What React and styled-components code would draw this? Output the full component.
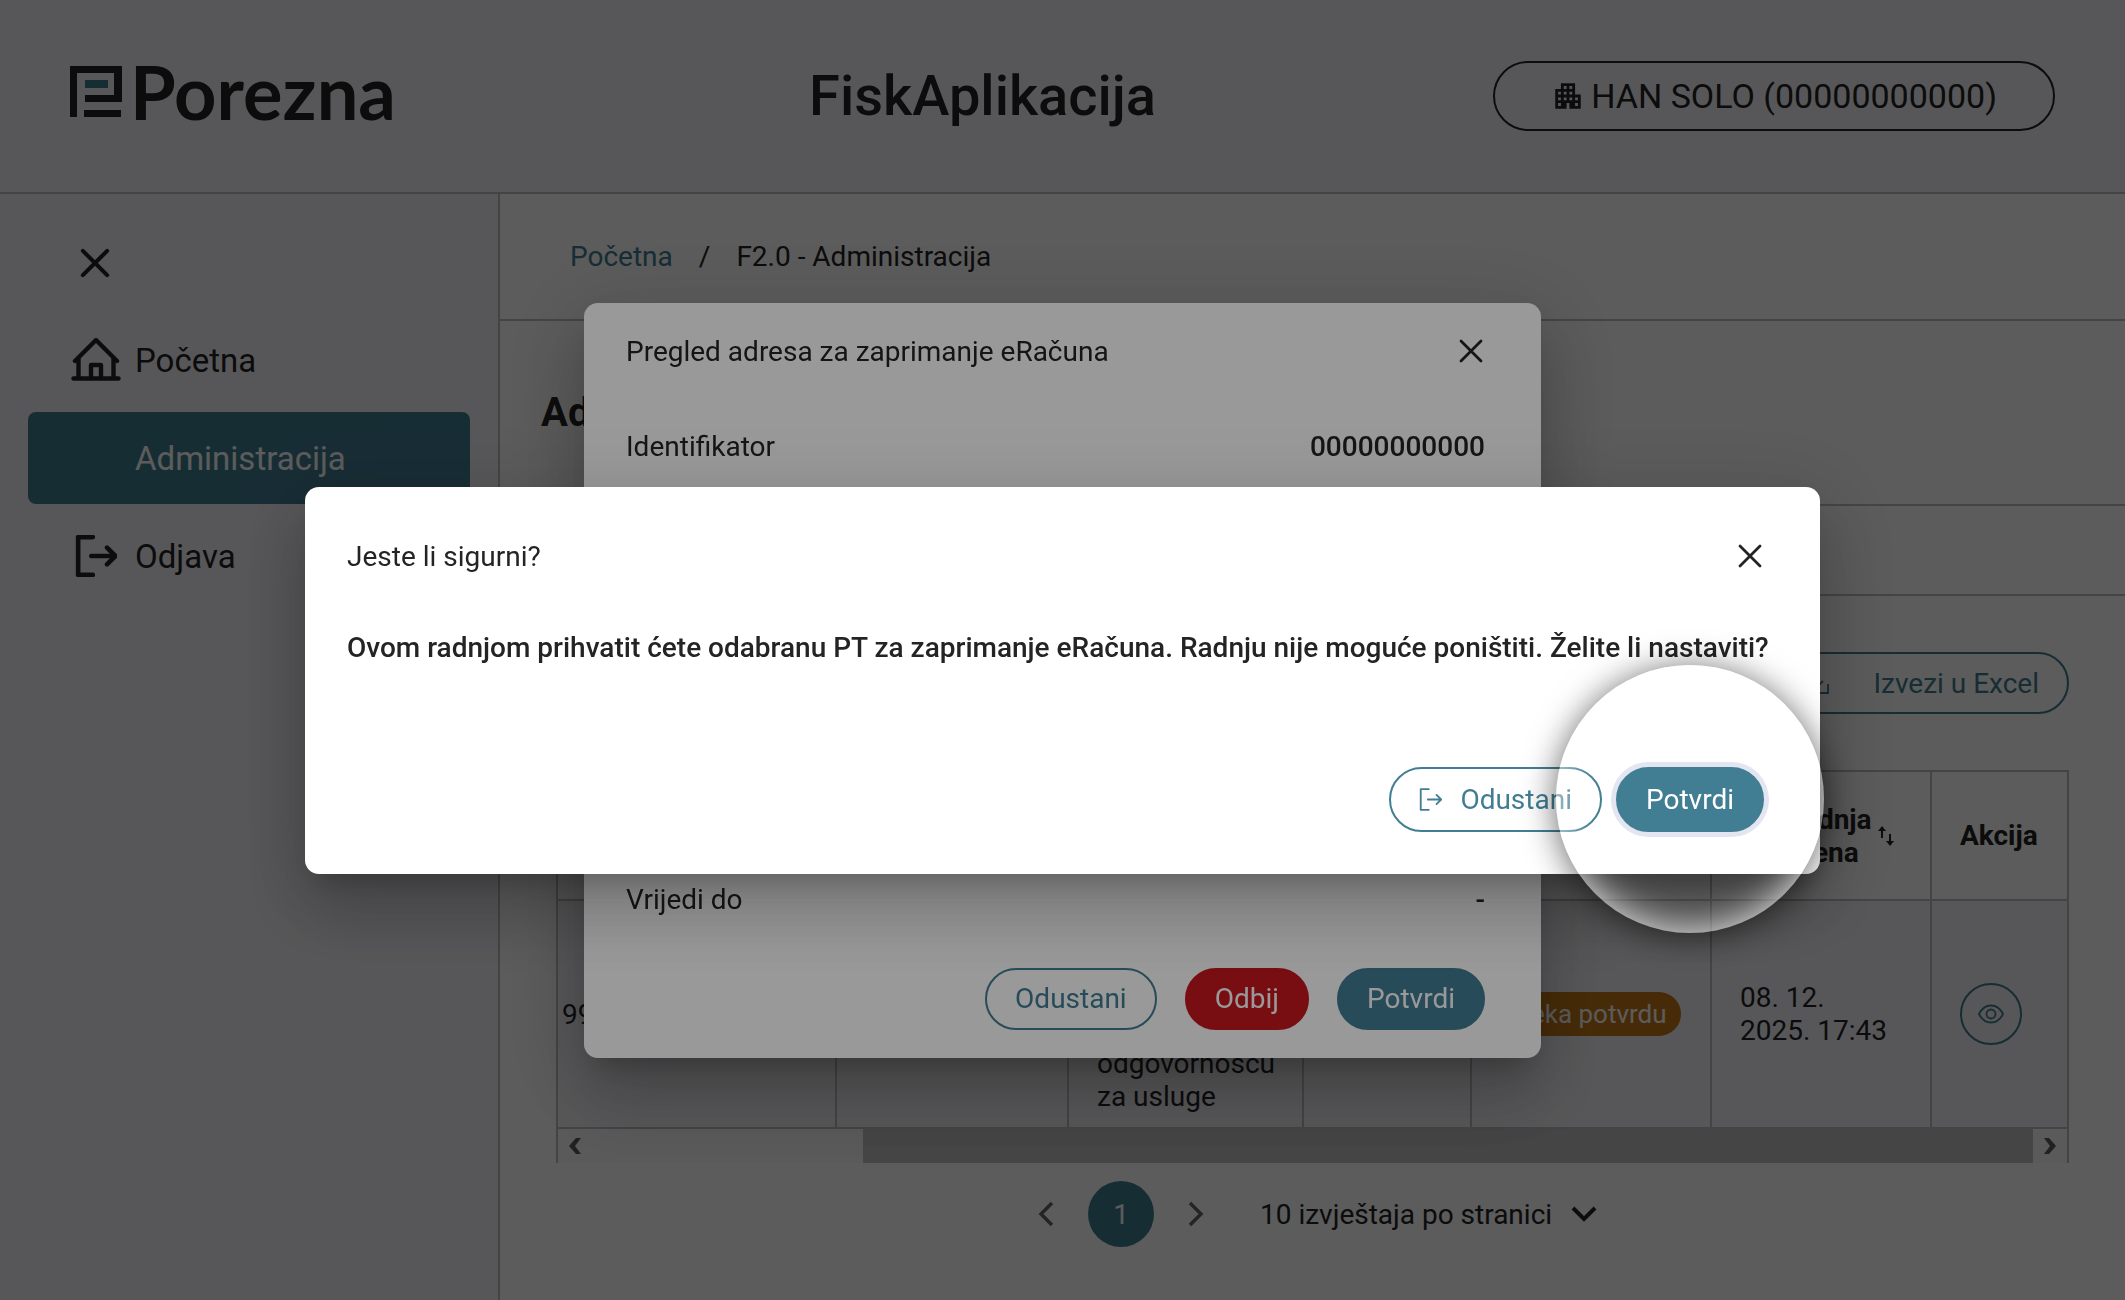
import React, { useState } from "react";
import styled, { createGlobalStyle, css } from "styled-components";
import { MdApartment } from "react-icons/md";

const TEAL = "#417e93";
const INK = "#242424";
const LINE = "#bebebe";
const TINT = "#f4f4f9";

const GlobalStyle = createGlobalStyle`
  * {
    box-sizing: border-box;
  }

  body {
    margin: 0;
    background: #ffffff;
    color: ${INK};
    font-family: Roboto, "Liberation Sans", sans-serif;
    font-size: 28px;
    line-height: 33px;
  }

  button, select {
    font: inherit;
    color: inherit;
    cursor: pointer;
  }

  svg {
    display: block;
    flex: none;
  }
`;

const Page = styled.div`
  display: flex;
  flex-direction: column;
  min-height: 100vh;
`;

const Header = styled.header`
  display: flex;
  align-items: center;
  justify-content: space-between;
  padding: 61px 70px;
  background: ${TINT};
  border-bottom: 2px solid ${LINE};
`;

const Logo = styled.a`
  display: flex;
  align-items: center;
  gap: 8px;
  padding: 0 76px 8px 0;
  color: ${INK};
  text-decoration: none;
  font-family: Lato, sans-serif;
  font-size: 74px;
  font-weight: 700;
  line-height: 62px;
`;

const AppName = styled.div`
  font-size: 56px;
  font-weight: 500;
  line-height: 70px;
`;

const UserButton = styled.button`
  display: flex;
  align-items: center;
  gap: 6px;
  height: 70px;
  padding: 0 56px;
  border: 2px solid ${INK};
  border-radius: 35px;
  background: none;
  font-size: 34px;
`;

const Body = styled.div`
  display: flex;
  flex: 1;
`;

const Sidebar = styled.nav`
  display: flex;
  flex-direction: column;
  flex: none;
  gap: 6px;
  width: 500px;
  padding: 50px 28px;
  background: ${TINT};
  border-right: 2px solid ${LINE};
`;

const SidebarClose = styled.button`
  display: flex;
  align-items: center;
  align-self: flex-start;
  height: 38px;
  margin-bottom: 26px;
  padding: 0 50px;
  border: 0;
  background: none;
`;

const NavItem = styled.a`
  display: flex;
  align-items: center;
  gap: 14px;
  height: 92px;
  padding: 0 43px;
  border-radius: 8px;
  color: ${(props) => (props.$active ? "#ffffff" : INK)};
  background: ${(props) => (props.$active ? TEAL : "none")};
  font-size: 33px;
  text-decoration: none;
`;

const NavIcon = styled.span`
  display: flex;
  justify-content: center;
  width: 50px;
`;

const Main = styled.main`
  flex: 1;
  min-width: 0;
`;

const Breadcrumbs = styled.div`
  display: flex;
  align-items: center;
  gap: 26px;
  height: 127px;
  padding: 0 70px;
  border-bottom: 2px solid ${LINE};

  a {
    color: ${TEAL};
    text-decoration: none;
  }
`;

const TitleBar = styled.div`
  display: flex;
  align-items: center;
  height: 185px;
  padding: 0 41px;
  border-bottom: 2px solid ${LINE};

  h1 {
    margin: 0;
    font-size: 40px;
    font-weight: 700;
  }
`;

const FilterBar = styled.div`
  height: 90px;
  border-bottom: 2px solid ${LINE};
`;

const Content = styled.section`
  display: flex;
  flex-direction: column;
  padding: 56px;
`;

const Button = styled.button`
  display: flex;
  align-items: center;
  gap: ${(props) => props.$gap || 18}px;
  height: ${(props) => (props.$large ? 65 : 62)}px;
  padding: 0 28px;
  border: 2px solid ${(props) => props.$color || TEAL};
  border-radius: 33px;
  background: none;
  color: ${TEAL};

  ${(props) =>
    props.$filled &&
    css`
      background: ${props.$color || TEAL};
      color: #ffffff;
    `}

  ${(props) =>
    props.$focused &&
    css`
      box-shadow: 0 0 0 5px #e3e5f0;
    `}
`;

const ExportButton = styled(Button)`
  align-self: flex-end;
  margin-bottom: 56px;
`;

const TableFrame = styled.div`
  border: 2px solid ${LINE};
  border-bottom: 0;
`;

const Table = styled.table`
  width: 100%;
  table-layout: fixed;
  border-collapse: separate;
  border-spacing: 0;

  th,
  td {
    padding: 14px 28px;
    border-right: 2px solid ${LINE};
    border-bottom: 2px solid ${LINE};
    text-align: left;
  }

  th:last-child,
  td:last-child {
    border-right: 0;
  }

  th {
    height: 129px;
    font-weight: 700;
  }

  td {
    background: ${TINT};
  }

  td:first-child {
    padding: 0 4px;
  }
`;

const SortHead = styled.span`
  display: flex;
  align-items: center;
  gap: 4px;
  padding-right: 8px;
`;

const Badge = styled.span`
  display: inline-block;
  padding: 0 14px;
  border-radius: 22px;
  background: #c67b18;
  color: #ffffff;
  font-size: 26px;
  line-height: 44px;
  white-space: nowrap;
`;

const EyeButton = styled.button`
  display: flex;
  align-items: center;
  justify-content: center;
  width: 62px;
  height: 62px;
  padding: 0;
  border: 2px solid ${TEAL};
  border-radius: 50%;
  background: none;
  color: ${TEAL};
`;

const ScrollTrack = styled.div`
  display: flex;
  height: 34px;
  background: #fafafa;
`;

const ScrollArrow = styled.button`
  display: flex;
  align-items: center;
  justify-content: center;
  width: 34px;
  padding: 0;
  border: 0;
  background: none;
  color: #5c5c5c;
`;

const ScrollThumb = styled.div`
  flex: 1;
  margin-left: 271px;
  background: #c1c1c1;
`;

const Pagination = styled.div`
  display: flex;
  align-items: center;
  justify-content: center;
  gap: 34px;
  margin-top: 18px;
  padding-left: 10px;
`;

const PageArrow = styled.button`
  padding: 0;
  border: 0;
  background: none;
  color: #666666;
`;

const PageNumber = styled.button`
  width: 66px;
  height: 66px;
  padding: 0;
  border: 0;
  border-radius: 50%;
  background: ${TEAL};
  color: #ffffff;
`;

const PageSize = styled.label`
  display: flex;
  align-items: center;
  gap: 18px;
  margin-left: 22px;

  select {
    padding: 0;
    border: 0;
    appearance: none;
    background: none;
  }
`;

const Overlay = styled.div`
  position: fixed;
  inset: 0;
  display: flex;
  align-items: center;
  justify-content: center;
  padding-top: 60px;
  background: rgba(0, 0, 0, 0.4);
`;

const Dialog = styled.div`
  display: flex;
  flex-direction: column;
  min-width: ${(props) => (props.$roomy ? 1515 : 957)}px;
  padding: ${(props) => (props.$roomy ? "53px 42px 42px" : "32px 42px 28px")};
  border-radius: 14px;
  background: #ffffff;
  box-shadow:
    0 19px 26px -12px rgba(0, 0, 0, 0.2),
    0 42px 66px 5px rgba(0, 0, 0, 0.14),
    0 16px 80px 14px rgba(0, 0, 0, 0.12);
`;

const DialogHead = styled.div`
  display: flex;
  align-items: center;
  justify-content: space-between;
  padding-right: 14px;

  h2 {
    margin: 0;
    font-size: 28px;
    font-weight: 400;
  }

  button {
    padding: 0;
    border: 0;
    background: none;
  }
`;

const Details = styled.dl`
  display: flex;
  flex-direction: column;
  justify-content: space-between;
  min-height: 486px;
  margin: 62px 14px 52px 0;
`;

const DetailRow = styled.div`
  display: flex;
  justify-content: space-between;

  dd {
    margin: 0;
    font-weight: 500;
  }
`;

const Message = styled.p`
  margin: 58px 0 103px;
  font-weight: 500;
`;

const DialogActions = styled.div`
  display: flex;
  justify-content: flex-end;
  gap: ${(props) => props.$gap || 28}px;
  padding-right: 14px;
`;

const Spotlight = styled.div`
  position: relative;

  &::after {
    content: "";
    position: absolute;
    top: 50%;
    left: 50%;
    width: 268px;
    height: 268px;
    border-radius: 50%;
    transform: translate(-50%, -50%);
    pointer-events: none;
    box-shadow:
      0 3px 34px rgba(0, 0, 0, 0.6),
      inset 0 0 38px 2px rgba(255, 255, 255, 0.85);
  }
`;

const LogoMark = () => (
  <svg width="52" height="52" viewBox="0 0 52 52" fill={INK}>
    <path d="M0 0h52v36H15v-7h29V7H7v44H0z" />
    <path d="M14 44h37v7H14z" />
    <path d="M15 14h23v8H15z" fill={TEAL} />
  </svg>
);

const CloseIcon = ({ size = 28, stroke = 2.8 }) => (
  <svg width={size} height={size} viewBox="0 0 28 28" fill="none" stroke={INK} strokeWidth={stroke} strokeLinecap="round">
    <path d="M4 4l20 20M24 4L4 24" />
  </svg>
);

const HomeIcon = () => (
  <svg width="50" height="44" viewBox="0 1 50 44" fill="none" stroke="currentColor" strokeWidth="4.4" strokeLinecap="round" strokeLinejoin="round">
    <path d="M2.500 41.500h45" />
    <path d="M4 24L25 3l21 21" />
    <path d="M7.500 22v19M42.500 22v19" />
    <path d="M20 41V28h10v13" />
  </svg>
);

const ExitIcon = ({ size = 42, stroke = 4.4 }) => (
  <svg width={size} height={size} viewBox="0 0 40 40" fill="none" stroke="currentColor" strokeWidth={stroke} strokeLinecap="round" strokeLinejoin="round">
    <path d="M17 2H3v36h14" />
    <path d="M15.500 20H38M30.500 12l8 8-8 8" />
  </svg>
);

const DownloadIcon = () => (
  <svg width="26" height="26" viewBox="0 0 26 26" fill="none" stroke="currentColor" strokeWidth="1.8">
    <path d="M1 14v9h24v-9" />
    <path d="M13 2v16M6 11l7 7 7-7" />
  </svg>
);

const SortIcon = () => (
  <svg width="16" height="20" viewBox="0 0 16 20" fill="currentColor">
    <path d="M4 0l4 5H5v7H3V5H0z" />
    <path d="M12 20l-4-5h3V8h2v7h3z" />
  </svg>
);

const EyeIcon = () => (
  <svg width="26" height="20" viewBox="0 0 26 20" fill="none" stroke="currentColor" strokeWidth="1.8">
    <path d="M1 10C4 4 8 1.500 13 1.500S22 4 25 10c-3 6-7 8.500-12 8.500S4 16 1 10z" />
    <circle cx="13" cy="10" r="4.500" />
  </svg>
);

const Chevron = ({ dir }) => (
  <svg width="16" height="26" viewBox="0 0 16 26" fill="none" stroke="currentColor" strokeWidth="3.4">
    <path d={dir === "left" ? "M14 2L3 13l11 11" : "M2 2l11 11L2 24"} />
  </svg>
);

const ScrollChevron = ({ dir }) => (
  <svg width="14" height="16" viewBox="0 0 14 16" fill="currentColor">
    <path d={dir === "left" ? "M13 0H8L1 8l7 8h5L7 8z" : "M1 0h5l7 8-7 8H1l6-8z"} />
  </svg>
);

const DownIcon = () => (
  <svg width="26" height="18" viewBox="0 0 26 18" fill="none" stroke={INK} strokeWidth="4">
    <path d="M2 3l11 11L24 3" />
  </svg>
);

const details = [
  ["Identifikator", "00000000000"],
  ["Shema", "9934"],
  ["Naziv PT", "Informacijski posrednik"],
  ["Status", "Čeka potvrdu"],
  ["Zadnja promjena", "08. 12. 2025. 17:43"],
  ["Vrijedi od", "08. 12. 2025."],
  ["Vrijedi do", "-"],
];

const columnWidths = ["auto", 232, 235, 168, 240, 220, 135];

const App = () => {
  const [detailsOpen, setDetailsOpen] = useState(true);
  const [confirmOpen, setConfirmOpen] = useState(true);

  const closeAll = () => {
    setConfirmOpen(false);
    setDetailsOpen(false);
  };

  return (
    <Page>
      <GlobalStyle />

      <Header>
        <Logo href="#">
          <LogoMark />
          Porezna
        </Logo>
        <AppName>FiskAplikacija</AppName>
        <UserButton>
          <MdApartment size={34} />
          HAN SOLO (00000000000)
        </UserButton>
      </Header>

      <Body>
        <Sidebar>
          <SidebarClose aria-label="Zatvori izbornik">
            <CloseIcon size={34} stroke={3.4} />
          </SidebarClose>
          <NavItem href="#">
            <NavIcon>
              <HomeIcon />
            </NavIcon>
            Početna
          </NavItem>
          <NavItem href="#" $active>
            <NavIcon />
            Administracija
          </NavItem>
          <NavItem href="#">
            <NavIcon>
              <ExitIcon />
            </NavIcon>
            Odjava
          </NavItem>
        </Sidebar>

        <Main>
          <Breadcrumbs>
            <a href="#">Početna</a>
            <span>/</span>
            <span>F2.0 - Administracija</span>
          </Breadcrumbs>
          <TitleBar>
            <h1>Administracija</h1>
          </TitleBar>
          <FilterBar />

          <Content>
            <ExportButton $gap={44}>
              <DownloadIcon />
              Izvezi u Excel
            </ExportButton>

            <TableFrame>
              <Table>
                <colgroup>
                  {columnWidths.map((width, i) => (
                    <col key={i} style={{ width }} />
                  ))}
                </colgroup>
                <thead>
                  <tr>
                    <th>Identifikator</th>
                    <th>Vrijedi od</th>
                    <th>Naziv PT</th>
                    <th>Vrijedi do</th>
                    <th>Status</th>
                    <th>
                      <SortHead>
                        Posljednja promjena
                        <SortIcon />
                      </SortHead>
                    </th>
                    <th>Akcija</th>
                  </tr>
                </thead>
                <tbody>
                  <tr>
                    <td>9934:00000000000</td>
                    <td>08. 12. 2025.</td>
                    <td>Informacijski posrednik društvo s ograničenom odgovornošću za usluge</td>
                    <td>-</td>
                    <td>
                      <Badge>Čeka potvrdu</Badge>
                    </td>
                    <td>08. 12. 2025.&nbsp;17:43</td>
                    <td>
                      <EyeButton aria-label="Pregled" onClick={() => setDetailsOpen(true)}>
                        <EyeIcon />
                      </EyeButton>
                    </td>
                  </tr>
                </tbody>
              </Table>
              <ScrollTrack>
                <ScrollArrow aria-label="Pomakni lijevo">
                  <ScrollChevron dir="left" />
                </ScrollArrow>
                <ScrollThumb />
                <ScrollArrow aria-label="Pomakni desno">
                  <ScrollChevron dir="right" />
                </ScrollArrow>
              </ScrollTrack>
            </TableFrame>

            <Pagination>
              <PageArrow aria-label="Prethodna">
                <Chevron dir="left" />
              </PageArrow>
              <PageNumber>1</PageNumber>
              <PageArrow aria-label="Sljedeća">
                <Chevron dir="right" />
              </PageArrow>
              <PageSize>
                <select aria-label="Broj izvještaja po stranici">
                  <option>10 izvještaja po stranici</option>
                </select>
                <DownIcon />
              </PageSize>
            </Pagination>
          </Content>
        </Main>
      </Body>

      {detailsOpen && (
        <Overlay>
          <Dialog role="dialog">
            <DialogHead>
              <h2>Pregled adresa za zaprimanje eRačuna</h2>
              <button aria-label="Zatvori" onClick={() => setDetailsOpen(false)}>
                <CloseIcon />
              </button>
            </DialogHead>
            <Details>
              {details.map(([label, value]) => (
                <DetailRow key={label}>
                  <dt>{label}</dt>
                  <dd>{value}</dd>
                </DetailRow>
              ))}
            </Details>
            <DialogActions>
              <Button onClick={() => setDetailsOpen(false)}>Odustani</Button>
              <Button $filled $color="#c8161e">
                Odbij
              </Button>
              <Button $filled onClick={() => setConfirmOpen(true)}>
                Potvrdi
              </Button>
            </DialogActions>
          </Dialog>
        </Overlay>
      )}

      {confirmOpen && (
        <Overlay>
          <Dialog role="alertdialog" $roomy>
            <DialogHead>
              <h2>Jeste li sigurni?</h2>
              <button aria-label="Zatvori" onClick={() => setConfirmOpen(false)}>
                <CloseIcon />
              </button>
            </DialogHead>
            <Message>
              Ovom radnjom prihvatit ćete odabranu PT za zaprimanje eRačuna. Radnju nije moguće poništiti. Želite li
              nastaviti?
            </Message>
            <DialogActions $gap={14}>
              <Button $large onClick={() => setConfirmOpen(false)}>
                <ExitIcon size={23} stroke={3.2} />
                Odustani
              </Button>
              <Spotlight>
                <Button $large $filled $focused onClick={closeAll}>
                  Potvrdi
                </Button>
              </Spotlight>
            </DialogActions>
          </Dialog>
        </Overlay>
      )}
    </Page>
  );
};

export default App;
